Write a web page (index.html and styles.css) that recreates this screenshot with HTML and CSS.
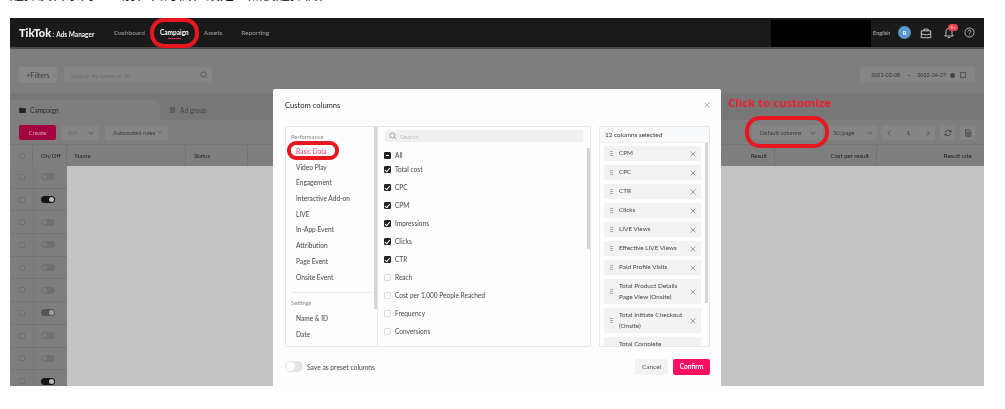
FILE: index.html
```html
<!DOCTYPE html>
<html lang="en">
<head>
<meta charset="utf-8">
<title>Custom columns</title>
<link rel="stylesheet" href="styles.css">
</head>
<body>
<div class="caption"><span class="caption-text">選擇廣告系列，並前往自訂欄位設定，然後選擇欄位</span></div>
<div class="frame">
  <header class="topbar">
    <div class="logo"><span class="logo-main">TikTok</span><span class="logo-dot">:</span><span class="logo-sub">Ads Manager</span></div>
    <nav class="nav">
      <span class="nav-item nav-dash">Dashboard</span>
      <span class="nav-item nav-active">Campaign</span>
      <span class="nav-item nav-assets">Assets</span>
      <span class="nav-item">Reporting</span>
    </nav>
    <div class="redacted"></div>
    <div class="top-right">
      <span class="lang">English</span>
      <span class="avatar">R</span>
      <svg class="top-icon" viewBox="0 0 14 14"><path d="M1.500 4.500h11v8h-11zM4.500 4.500V2.500h5v2M1.500 8l4 1h3l4-1" fill="none" stroke="#ddd" stroke-width="1"/></svg>
      <span class="bell">
        <svg class="top-icon" viewBox="0 0 14 14"><path d="M7 1.500c-2.500 0-3.500 2-3.500 4v3l-1.500 2h10l-1.500-2v-3c0-2-1-4-3.500-4zM5.800 12.300h2.400" fill="none" stroke="#ddd" stroke-width="1"/></svg>
        <span class="badge">9+</span>
      </span>
      <svg class="top-icon help" viewBox="0 0 14 14"><circle cx="7" cy="7" r="5.800" fill="none" stroke="#ddd" stroke-width="1"/><path d="M5.300 5.500c0-2.200 3.400-2.200 3.400 0 0 1.300-1.700 1.300-1.700 2.800M7 9.500v1" fill="none" stroke="#ddd" stroke-width="1"/></svg>
    </div>
  </header>

  <main class="page">
    <div class="filter-row">
      <div class="filters">+Filters</div>
      <div class="search-main"><span>Search by name or ID</span>
        <svg class="mini" viewBox="0 0 10 10"><circle cx="4.300" cy="4.300" r="3.200" fill="none" stroke="#555" stroke-width="1"/><path d="M6.800 6.800l2.200 2.200" stroke="#555" stroke-width="1"/></svg>
      </div>
      <div class="dates"><span>2021-02-08</span><span class="tilde">~</span><span>2022-04-27</span><span class="dot-i"></span><span class="cal"></span></div>
    </div>

    <div class="tabs">
      <div class="tab tab-on"><svg class="folder" viewBox="0 0 10 9"><path d="M0 1h4l1 1h5v7H0z" fill="#222"/></svg>Campaign</div>
      <div class="tab tab-off"><span class="doc"></span>Ad group</div>
    </div>

    <div class="tools">
      <div class="create">Create</div>
      <div class="tool edit">Edit<i class="chev"></i></div>
      <div class="tool auto">Automated rules<i class="chev small"></i></div>
      <div class="tool-right">
        <div class="tool cols">Default columns<i class="chev"></i></div>
        <div class="tool pagesize">50/page<i class="chev"></i></div>
        <div class="tool pager"><i class="chev left"></i><span>1</span><i class="chev right"></i></div>
        <div class="tool square"><svg class="mini" viewBox="0 0 10 10"><path d="M8.500 3.500A4 4 0 0 0 1.500 4M1.500 6.500A4 4 0 0 0 8.500 6M8.800 1.200v2.500H6.300M1.200 8.800V6.300h2.500" fill="none" stroke="#333" stroke-width=".9"/></svg></div>
        <div class="tool square"><svg class="mini" viewBox="0 0 10 10"><path d="M2 1h4.500L8.500 3v6H2zM4 4h2.500v3.500H4z" fill="none" stroke="#333" stroke-width=".9"/></svg></div>
      </div>
    </div>

    <div class="thead">
      <div class="c-check"><span class="box"></span></div>
      <div class="c-switch">On/Off</div>
      <div class="c-name">Name</div>
      <div class="c-status">Status</div>
      <div class="c-mid"></div>
      <div class="c-result">Result</div>
      <div class="c-cost">Cost per result</div>
      <div class="c-rate">Result rate</div>
    </div>

    <div class="tbody">
      <div class="fixed">
        <div class="row"><span class="box"></span><span class="sw"></span></div>
        <div class="row"><span class="box"></span><span class="sw sw-on"></span></div>
        <div class="row"><span class="box"></span><span class="sw"></span></div>
        <div class="row"><span class="box"></span><span class="sw"></span></div>
        <div class="row"><span class="box"></span><span class="sw"></span></div>
        <div class="row"><span class="box"></span><span class="sw"></span></div>
        <div class="row"><span class="box"></span><span class="sw sw-mid"></span></div>
        <div class="row"><span class="box"></span><span class="sw"></span></div>
        <div class="row"><span class="box"></span><span class="sw"></span></div>
        <div class="row"><span class="box"></span><span class="sw sw-on"></span></div>
      </div>
      <div class="empty"></div>
    </div>
  </main>

  <section class="modal">
    <div class="modal-head"><span>Custom columns</span><svg class="x x-close" viewBox="0 0 6 6"><path d="M.5.500l5 5M5.500.500l-5 5" stroke="#999" stroke-width=".8"/></svg></div>
    <div class="modal-body">
      <div class="picker">
        <div class="cats">
          <div class="cat-title">Performance</div>
          <div class="cat cat-on">Basic Data</div>
          <div class="cat">Video Play</div>
          <div class="cat">Engagement</div>
          <div class="cat">Interactive Add-on</div>
          <div class="cat">LIVE</div>
          <div class="cat">In-App Event</div>
          <div class="cat">Attribution</div>
          <div class="cat">Page Event</div>
          <div class="cat">Onsite Event</div>
          <div class="cat-sep"></div>
          <div class="cat-title">Settings</div>
          <div class="cat cat-gap">Name &amp; ID</div>
          <div class="cat">Date</div>
          <div class="bar bar-a"></div>
        </div>
        <div class="metrics">
          <div class="metric-search"><svg class="mini" viewBox="0 0 10 10"><circle cx="4.300" cy="4.300" r="3.200" fill="none" stroke="#888" stroke-width=".9"/><path d="M6.800 6.800l2.200 2.200" stroke="#888" stroke-width=".9"/></svg><span>Search</span></div>
          <div class="metric metric-all"><span class="cb cb-dash"></span>All</div>
          <div class="metric"><span class="cb cb-on"></span>Total cost</div>
          <div class="metric"><span class="cb cb-on"></span>CPC</div>
          <div class="metric"><span class="cb cb-on"></span>CPM</div>
          <div class="metric"><span class="cb cb-on"></span>Impressions</div>
          <div class="metric"><span class="cb cb-on"></span>Clicks</div>
          <div class="metric"><span class="cb cb-on"></span>CTR</div>
          <div class="metric"><span class="cb"></span>Reach</div>
          <div class="metric"><span class="cb"></span>Cost per 1,000 People Reached</div>
          <div class="metric"><span class="cb"></span>Frequency</div>
          <div class="metric"><span class="cb"></span>Conversions</div>
          <div class="metric"><span class="cb"></span></div>
          <div class="bar bar-b"></div>
        </div>
      </div>
      <div class="chosen">
        <div class="chosen-head">12 columns selected</div>
        <div class="chosen-list">
          <div class="item"><i class="grip"></i><span>CPM</span><svg class="x" viewBox="0 0 6 6"><path d="M.5.500l5 5M5.500.500l-5 5" stroke="#888" stroke-width=".8"/></svg></div>
          <div class="item"><i class="grip"></i><span>CPC</span><svg class="x" viewBox="0 0 6 6"><path d="M.5.500l5 5M5.500.500l-5 5" stroke="#888" stroke-width=".8"/></svg></div>
          <div class="item"><i class="grip"></i><span>CTR</span><svg class="x" viewBox="0 0 6 6"><path d="M.5.500l5 5M5.500.500l-5 5" stroke="#888" stroke-width=".8"/></svg></div>
          <div class="item"><i class="grip"></i><span>Clicks</span><svg class="x" viewBox="0 0 6 6"><path d="M.5.500l5 5M5.500.500l-5 5" stroke="#888" stroke-width=".8"/></svg></div>
          <div class="item"><i class="grip"></i><span>LIVE Views</span><svg class="x" viewBox="0 0 6 6"><path d="M.5.500l5 5M5.500.500l-5 5" stroke="#888" stroke-width=".8"/></svg></div>
          <div class="item"><i class="grip"></i><span>Effective LIVE Views</span><svg class="x" viewBox="0 0 6 6"><path d="M.5.500l5 5M5.500.500l-5 5" stroke="#888" stroke-width=".8"/></svg></div>
          <div class="item"><i class="grip"></i><span>Paid Profile Visits</span><svg class="x" viewBox="0 0 6 6"><path d="M.5.500l5 5M5.500.500l-5 5" stroke="#888" stroke-width=".8"/></svg></div>
          <div class="item item-tall"><i class="grip"></i><span>Total Product Details Page View (Onsite)</span><svg class="x" viewBox="0 0 6 6"><path d="M.5.500l5 5M5.500.500l-5 5" stroke="#888" stroke-width=".8"/></svg></div>
          <div class="item item-tall"><i class="grip"></i><span>Total Initiate Checkout (Onsite)</span><svg class="x" viewBox="0 0 6 6"><path d="M.5.500l5 5M5.500.500l-5 5" stroke="#888" stroke-width=".8"/></svg></div>
          <div class="item item-tall"><i class="grip"></i><span>Total Complete Payment (Onsite)</span><svg class="x" viewBox="0 0 6 6"><path d="M.5.500l5 5M5.500.500l-5 5" stroke="#888" stroke-width=".8"/></svg></div>
          <div class="bar bar-c"></div>
        </div>
      </div>
    </div>
    <div class="modal-foot">
      <span class="toggle"></span><span class="preset">Save as preset columns</span>
      <span class="btn btn-cancel">Cancel</span><span class="btn btn-confirm">Confirm</span>
    </div>
  </section>

  <div class="note">Click to customize</div>
  <div class="ring ring-campaign"></div>
  <div class="ring ring-basic"></div>
  <div class="ring ring-cols"></div>
</div>
</body>
</html>
```
FILE: styles.css
```css
* { box-sizing: border-box; }
html, body { margin: 0; padding: 0; }
body {
  width: 1005px;
  height: 409px;
  overflow: hidden;
  background: #fff;
  font-family: "Lato", "Liberation Sans", "Noto Sans CJK TC", sans-serif;
  color: #222;
}
.caption {
  height: 18px;
  overflow: hidden;
  padding-left: 10px;
  color: #111;
  font-family: "Noto Sans CJK TC", sans-serif;
}
.caption-text {
  display: block;
  font-size: 14px;
  line-height: 14px;
  margin-top: -14px;
  white-space: nowrap;
}
.frame {
  position: relative;
  width: 974px;
  height: 368px;
  margin-left: 10px;
  overflow: hidden;
  background: #7e7e7e;
  font-size: 6.500px;
  filter: blur(.5px);
}
.topbar {
  display: flex;
  align-items: center;
  height: 31px;
  background: #1a1a1a;
  border-bottom: 2px solid #4a4a4a;
  color: #aaa;
}
.logo { width: 104px; padding-left: 9px; color: #f2f2f2; white-space: nowrap; }
.logo-main { font-size: 11px; font-weight: 900; }
.logo-dot { font-size: 8px; margin: 0 2px 0 1px; color: #eee; }
.logo-sub { font-size: 6.500px; font-weight: 700; }
.nav { display: flex; height: 100%; align-items: center; }
.nav-item { font-size: 6.500px; color: #a2a2a2; white-space: nowrap; }
.nav-dash { margin-right: 15px; }
.nav-active { position: relative; color: #fff; font-weight: 700; margin-right: 15px; }
.nav-active::after {
  content: "";
  position: absolute;
  left: 8px;
  right: 8px;
  bottom: -3px;
  height: 1px;
  background: #e5195f;
}
.nav-assets { margin-right: 19px; }
.redacted { width: 100px; height: 27px; background: #000; margin-left: auto; align-self: flex-start; margin-top: 2px; }
.top-right { display: flex; align-items: center; width: 113px; padding-left: 2px; }
.lang { font-size: 5.600px; color: #bbb; width: 25px; }
.avatar {
  width: 13px; height: 13px; border-radius: 50%;
  background: #5a97cf; color: #fff; font-size: 5.500px; font-weight: 700;
  display: flex; align-items: center; justify-content: center;
  margin-right: 9px;
}
.top-icon { width: 12px; height: 12px; display: block; }
.bell { position: relative; margin: 0 9px 0 11px; }
.help { width: 11px; height: 11px; }
.badge {
  position: absolute; top: -3px; left: 5px;
  width: 10px; height: 7px; border-radius: 4px;
  background: #f04050; color: #fff; font-size: 4.500px; line-height: 7px; text-align: center;
}
.page { height: 337px; }
.filter-row { display: flex; align-items: flex-start; height: 44px; padding: 18px 9px 0 9px; }
.filters {
  width: 38px; height: 16px; background: #888; border-radius: 2px;
  font-size: 7px; line-height: 16px; text-align: center; color: #3b3b3b; margin-right: 7px;
}
.search-main {
  width: 148px; height: 16px; background: #858585; border-radius: 2px;
  display: flex; align-items: center; justify-content: space-between;
  padding: 0 4px 0 7px; color: #6a6a6a; font-size: 6.400px;
}
.mini { width: 8px; height: 8px; display: block; }
.dates {
  margin-left: auto; width: 115px; height: 16px; background: #858585; border-radius: 2px;
  display: flex; align-items: center; padding-left: 11px; font-size: 5.400px; color: #333; white-space: nowrap;
}
.tilde { margin: 0 7px; }
.dot-i { width: 5px; height: 5px; border-radius: 50%; background: #444; margin-left: 4px; }
.cal { width: 6px; height: 6px; border: 1px solid #555; margin-left: 5px; }
.tabs { display: flex; align-items: flex-end; height: 27px; background: #777; }
.tab { height: 20px; display: flex; align-items: center; font-size: 6.600px; padding-left: 9px; color: #2a2a2a; white-space: nowrap; }
.tab-on { width: 150px; background: #7e7e7e; border-radius: 0 6px 0 0; }
.tab-off { color: #444; padding-left: 10px; }
.folder { width: 7px; height: 6px; margin-right: 4px; }
.doc { width: 5px; height: 6px; background: #5f5f5f; margin-right: 5px; }
.tools { display: flex; align-items: flex-start; height: 24px; padding: 5px 9px 0 9px; gap: 6px; }
.create {
  width: 37px; height: 15px; background: #a5033f; border-radius: 2px; color: #dca9bb;
  font-size: 6px; line-height: 15px; text-align: center;
}
.tool {
  height: 15px; background: #858585; border-radius: 2px; display: flex; align-items: center;
  justify-content: space-between; color: #3a3a3a; font-size: 5.800px; padding: 0 7px; white-space: nowrap;
}
.edit { width: 37px; color: #6d6d6d; padding: 0 6px; }
.auto { width: 63px; padding: 0 8px; justify-content: flex-start; gap: 3px; }
.chev {
  display: inline-block; width: 4px; height: 4px; border: solid #666; border-width: 0 .7px .7px 0;
  transform: rotate(45deg); margin-top: -2px; flex: none;
}
.chev.small { width: 3px; height: 3px; }
.chev.left { transform: rotate(135deg); margin-top: 0; }
.chev.right { transform: rotate(-45deg); margin-top: 0; }
.tool-right { margin-left: auto; display: flex; gap: 5px; }
.cols { width: 71px; padding: 0 8px; }
.pagesize { width: 49px; padding: 0 5px; }
.pager { width: 53px; padding: 0 6px; }
.square { width: 15px; padding: 0; justify-content: center; }
.thead { display: flex; height: 22px; align-items: center; font-size: 6px; color: #1f1f1f; background: #7f7f7f; border-top: 1px solid #777; white-space: nowrap; }
.thead > div { height: 100%; display: flex; align-items: center; border-right: 1px solid #747474; }
.c-check { width: 23px; padding-left: 9px; }
.c-switch { width: 34px; padding-left: 8px; }
.c-name { width: 119px; padding-left: 8px; }
.c-status { width: 62px; padding-left: 8px; }
.c-mid { width: 409px; }
.c-result { width: 118px; justify-content: flex-end; padding-right: 7px; }
.c-cost { width: 102px; justify-content: flex-end; padding-right: 7px; }
.c-rate { flex: 1; justify-content: flex-end; padding-right: 12px; border-right: 0 !important; }
.box { display: block; width: 6px; height: 6px; border: 1px solid #707070; background: #808080; border-radius: 1px; }
.tbody { display: flex; height: 222px; }
.fixed { width: 57px; flex: none; }
.row { height: 22.700px; display: flex; align-items: center; padding-left: 9px; border-bottom: 1px solid #747474; position: relative; }
.row::after { content: ""; position: absolute; left: 23px; top: 0; bottom: 0; width: 1px; background: #767676; }
.sw { display: block; width: 14px; height: 7px; margin-left: 16px; border-radius: 4px; background: #707070; position: relative; }
.sw::after { content: ""; position: absolute; left: 1px; top: 1px; width: 5px; height: 5px; border-radius: 50%; background: #7c7c7c; }
.sw-on { background: #151515; }
.sw-on::after { left: auto; right: 1px; background: #bdbdbd; }
.sw-mid { background: #555; }
.sw-mid::after { left: auto; right: 1px; background: #a0a0a0; }
.empty { flex: 1; background: #c3c3c3; }
.modal {
  position: absolute; left: 263px; top: 71px; width: 448px; height: 297px;
  background: #fdfdfd; border-radius: 2px 2px 0 0; padding: 0 11px 0 12px;
  display: flex; flex-direction: column;
}
.modal-head { height: 37px; padding-bottom: 6px; display: flex; align-items: center; justify-content: space-between; font-size: 7.600px; color: #222; }
.x { width: 6px; height: 6px; flex: none; display: block; }
.modal-body { display: flex; gap: 8px; height: 221px; }
.picker { width: 306px; height: 221px; display: flex; border: 1px solid #e6e6e6; border-radius: 2px; overflow: hidden; }
.cats { width: 92px; flex: none; padding: 5px 5px 0 5px; position: relative; border-right: 1px solid #e8e8e8; overflow: hidden; }
.cat-title { font-size: 5.800px; color: #888; height: 10px; line-height: 10px; }
.cat { height: 15.700px; line-height: 15.700px; padding-left: 5px; font-size: 6.600px; color: #444; white-space: nowrap; }
.cat-on { color: #f0397a; margin-top: 2px; }
.cat-sep { height: 1px; background: #e3e8ee; margin: 7px 1px 5px; }
.cat-gap { margin-top: 3px; }
.bar { position: absolute; width: 3px; background: #d5d5d5; }
.bar-a { right: 0; top: 0; height: 182px; }
.metrics { flex: 1; padding: 3px 6px 0 6px; position: relative; overflow: hidden; }
.metric-search {
  height: 12px; width: 198px; margin-left: 1px; background: #f0f0f0; border-radius: 2px;
  display: flex; align-items: center; gap: 3px; padding-left: 4px; color: #bbb; font-size: 6.400px;
}
.metric { height: 18px; display: flex; align-items: center; font-size: 6.550px; color: #444; white-space: nowrap; }
.metric-all { height: 14px; margin-top: 6px; margin-bottom: -2px; }
.cb { display: block; position: relative; width: 7px; height: 7px; margin-right: 4px; border: 1px solid #ddd; border-radius: 1px; flex: none; background: #fff; }
.cb-on, .cb-dash { background: #222; border-color: #222; }
.cb-on::after { content: ""; position: absolute; left: 1.200px; top: 0; width: 2px; height: 3.500px; border: solid #fff; border-width: 0 .8px .8px 0; transform: rotate(40deg); }
.cb-dash::after { content: ""; position: absolute; left: 1px; top: 2px; width: 3px; height: 1px; background: #fff; }
.bar-b { right: 0; top: 21px; height: 101px; }
.chosen { width: 111px; height: 221px; border: 1px solid #e6e6e6; border-radius: 2px; display: flex; flex-direction: column; overflow: hidden; }
.chosen-head { height: 16px; background: #f8f9fa; font-size: 6.400px; line-height: 15px; padding-left: 5px; color: #333; border-bottom: 1px solid #eee; flex: none; }
.chosen-list { position: relative; padding: 3px 4px 0 4px; flex: 1; overflow: hidden; }
.item { width: 97px; height: 15px; margin-bottom: 4px; background: #f2f2f2; border-radius: 1px; display: flex; align-items: center; padding: 0 5px 0 6px; font-size: 6.400px; color: #444; }
.item span { flex: 1; line-height: 10.300px; padding-right: 3px; }
.grip { width: 3px; height: 5px; margin-right: 6px; flex: none; background-image: repeating-linear-gradient(0deg, #aaa 0 1px, transparent 1px 2px); }
.item-tall { height: 25px; }
.bar-c { right: 1px; top: 0; height: 160px; }
.modal-foot { flex: 1; display: flex; align-items: center; font-size: 6.700px; color: #444; }
.toggle { width: 18px; height: 11px; border-radius: 6px; background: #e4e4e4; margin-right: 4px; position: relative; }
.toggle::after { content: ""; position: absolute; left: 1px; top: 1px; width: 9px; height: 9px; border-radius: 50%; background: #fff; }
.preset { flex: 1; }
.btn { height: 16px; line-height: 16px; border-radius: 2px; text-align: center; font-size: 6.500px; }
.btn-cancel { width: 33px; background: #f2f2f2; color: #555; margin-right: 5px; }
.btn-confirm { width: 37px; background: #fe0f5e; color: #fff; font-weight: 700; }
.note { position: absolute; left: 718px; top: 77px; font-size: 11.400px; font-weight: 700; color: #ee2030; white-space: nowrap; font-family: "Open Sans", sans-serif; }
.ring { position: absolute; border: 4px solid #e8161f; }
.ring-campaign { left: 140px; top: 0; width: 49px; height: 30px; border-radius: 14px; }
.ring-basic { left: 277px; top: 123px; width: 52px; height: 19px; border-radius: 9px; }
.ring-cols { left: 735px; top: 98px; width: 84px; height: 32px; border-radius: 15px; }
```
